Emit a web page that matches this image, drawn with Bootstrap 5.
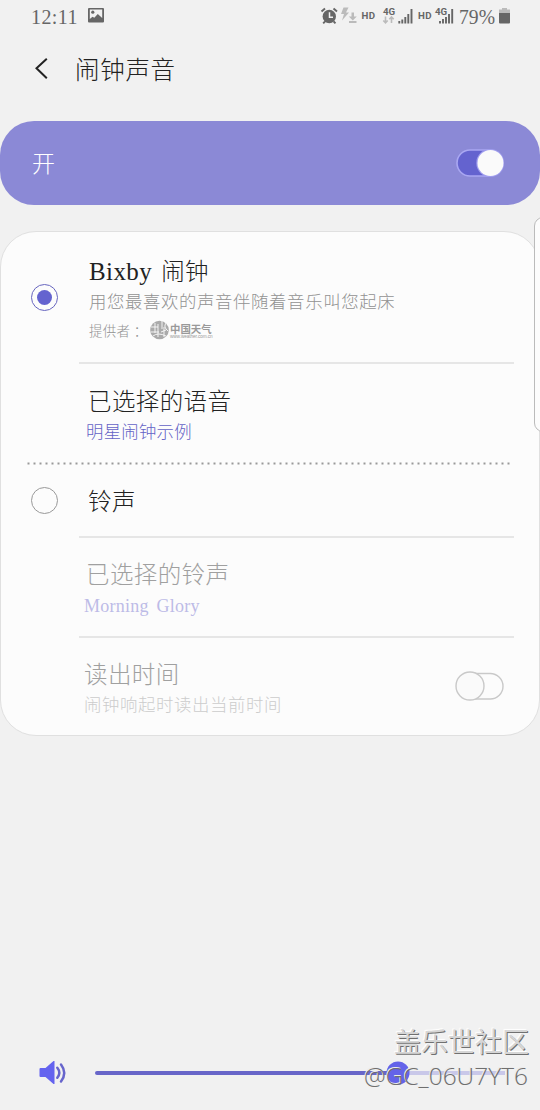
<!DOCTYPE html>
<html lang="zh-CN">
<head>
<meta charset="utf-8">
<meta name="viewport" content="width=device-width, initial-scale=1">
<title>闹钟声音</title>
<link href="https://cdn.jsdelivr.net/npm/bootstrap@5.3.0/dist/css/bootstrap.min.css" rel="stylesheet">
<style>
body{background:#f1f1f1;color:#222;font-family:"Liberation Serif","Noto Sans CJK SC",serif;font-weight:300;line-height:1}
.screen{width:540px;height:1110px}
.screen svg{display:block;flex:none}
.statusbar{height:34px;padding:0 28px 0 31px;color:#666}
.clock{font-size:20px;letter-spacing:.4px}
.photo-icon{margin:-4px 0 0 8px}
.titlebar{height:87px;padding:0 0 17px 34px}
.titlebar h1{font-size:24.5px;font-weight:300;letter-spacing:.7px;line-height:36px;padding-top:3px}
.master{height:84px;border-radius:34px;background:#8b89d6;color:#fff;padding:0 36px 0 32px;margin-bottom:26px}
.master span{font-size:23px;line-height:36px;padding-top:4px}
.panel{height:505px;border:1px solid #e0e0e0;border-radius:36px;background:#fcfcfc;padding:0 25px 0 26px}
.pick{width:52px;flex:none}
.radio-dot{width:27px;height:27px;border-radius:50%;border:1.4px solid #999;margin-left:4px}
.radio-dot.on{border-color:#6765bf}
.radio-dot.on i{width:15px;height:15px;border-radius:50%;background:#6463cf}
.cell{border-bottom:2px solid #e6e6e6}
.ttl{font-size:23.5px;line-height:30px;letter-spacing:.4px;white-space:nowrap}
.latin{font-size:25px;margin-right:9px}
.sub{font-size:17.4px;line-height:24px;letter-spacing:.62px;white-space:nowrap;color:#929292}
.provider{font-size:13.5px;width:60px;letter-spacing:.2px}
.violet{color:#6463c6}
.faded{color:#a0a0a0}
.dots{height:3px;margin:-1px 0 0 -1px}
.logo-name{font:700 10.4px/12px "Noto Sans CJK SC",sans-serif;color:#999}
.logo-url{font:4.7px/4px "Liberation Sans",sans-serif;color:#999;white-space:nowrap;letter-spacing:-.08px}
.volume{position:absolute;left:39px;right:0;top:1056px}
.edge{position:absolute;right:-12px;top:217px;width:18px;height:215px;border:1px solid #bbb;border-radius:9px;background:#fcfcfc}
.stamp{position:absolute;right:11px;top:1023px;font-family:"Noto Sans CJK SC",sans-serif;white-space:nowrap}
.stamp-a{font-size:27px;line-height:36px;font-weight:400;color:#d6d6d6;text-shadow:1px 1px 0 #707070,-1px -1px 1px #fff}
.stamp-b{font:24.5px/34px "Open Sans","Noto Sans CJK SC",sans-serif;font-weight:300;color:#6f6f6f;text-shadow:-1px -1px 0 #ececec;margin-right:1px}
</style>
</head>
<body>
<main class="screen position-relative overflow-hidden d-flex flex-column">
  <div class="statusbar d-flex align-items-center justify-content-between">
    <div class="d-flex align-items-center">
      <span class="clock">12:11</span>
      <svg class="photo-icon" width="20" height="16" viewBox="0 0 20 16"><path fill="#666" fill-rule="evenodd" d="M3 1h14q1 0 1 1v12.500q0 1-1 1H3q-1 0-1-1V2q0-1 1-1m.8 1.500V12l2.700-2.200 1.800 1 3.500-3.800 4.400 4V2.500z"/><circle cx="6.800" cy="5.200" r="1.600" fill="#666"/></svg>
    </div>
    <svg width="192" height="26" viewBox="320 3.500 192 26">
      <g fill="none" stroke="#666">
        <circle cx="329.300" cy="16" r="6.700" fill="#666" stroke="none"/>
        <path stroke-width="1.900" d="M321.500 11l3.500-3M337 11l-3.500-3M325 21l-1.800 1.800M333.700 21l1.800 1.800"/>
        <path stroke="#f1f1f1" stroke-width="1.500" d="M329.500 11.800v5h3.500"/>
      </g>
      <g fill="#bbb"><path d="M343.500 7h5l-2.500 5h3l-7 8 2-6.500h-3z"/><path d="M351.500 12h2.500v4h2.800l-4 4-4-4h2.700zM349 20.500h7.500v2H349z"/></g>
      <g fill="#666" font-family="Roboto,sans-serif" font-weight="700" font-size="9.700"><text x="361.500" y="18" textLength="13.500">HD</text><text x="383" y="14">4G</text><text x="418" y="18" textLength="13.500">HD</text><text x="435" y="14">4G</text></g>
      <path fill="none" stroke="#bbb" stroke-width="1.600" d="M385.500 16v6M383.300 20l2.200 2.300 2.200-2.300M391.500 22.500v-6M389.300 18.700l2.200-2.300 2.200 2.300"/>
      <path stroke="#666" stroke-width="1.900" d="M399.300 23v-2.500M402.300 23v-4M405.300 23v-6.500M408.300 23v-9.500M411.500 23V8.500M440 23v-2.500M443 23v-4.500M446 23v-6.500M449 23V13.500M452.200 23V8.500"/>
      <text x="459" y="23" font-family="Liberation Serif,serif" font-size="20.500" fill="#666" textLength="36" lengthAdjust="spacingAndGlyphs">79%</text>
      <path fill="#bbb" d="M502 7.500h5V9h3v4h-11V9h3z"/><path fill="#666" d="M499 12.500h11V22q0 1-1 1h-9q-1 0-1-1z"/>
    </svg>
  </div>
  <header class="titlebar d-flex align-items-center">
    <svg width="41" height="26" viewBox="0 0 41 26"><path d="M12.800 2.800L2.500 12.300l10.300 9.900" fill="none" stroke="#222" stroke-width="2"/></svg>
    <h1 class="m-0">闹钟声音</h1>
  </header>
  <section class="master d-flex align-items-center justify-content-between">
    <span>开</span>
    <svg width="48" height="28" viewBox="0 0 48 28"><rect x="1" y="1" width="45" height="26" rx="13" fill="#6463cf" stroke="#a9a7f2" stroke-width="1.600"/><circle cx="34.300" cy="14" r="14" fill="#a09eee"/><circle cx="34.500" cy="14" r="13" fill="#fafafa"/></svg>
  </section>
  <section class="panel">
    <div class="d-flex">
      <div class="pick" style="padding-top:51.500px"><div class="radio-dot on d-flex align-items-center justify-content-center"><i></i></div></div>
      <div class="cell flex-fill" style="height:132px;padding:25px 0 0 10px">
        <div class="ttl"><span class="latin">Bixby</span>闹钟</div>
        <div class="sub" style="margin-top:3px">用您最喜欢的声音伴随着音乐叫您起床</div>
        <div class="d-flex align-items-center" style="height:28px;margin-top:2px">
          <span class="sub provider pt-1">提供者&nbsp;：</span>
          <svg width="21" height="20" viewBox="0 0 21 20"><circle cx="10.500" cy="10" r="9.300" fill="#aaa"/><path fill="none" stroke="#fcfcfc" stroke-width=".9" d="M2 7h7M2 12h8M6 3v10M13 1v6M9 4v13M15 9v8M4 16q5-4 13 0M12 12l5-2M17 3q-3 4 2 8M12 8h4"/></svg>
          <div class="d-flex flex-column" style="padding-top:1px"><span class="logo-name">中国天气</span><span class="logo-url">www.weather.com.cn</span></div>
        </div>
      </div>
    </div>
    <div style="height:99px;padding:23px 0 0 61px">
      <div class="ttl">已选择的语音</div>
      <div class="sub violet" style="margin:3px 0 0 -2px;letter-spacing:.25px">明星闹钟示例</div>
    </div>
    <svg class="dots" width="488" height="3"><path d="M1.500 1.500H486" stroke="#999" stroke-width="2" stroke-dasharray="2 4"/></svg>
    <div class="d-flex">
      <div class="pick" style="padding-top:22px"><div class="radio-dot"></div></div>
      <div class="cell flex-fill" style="height:73px;padding:22px 0 0 9px"><div class="ttl">铃声</div></div>
    </div>
    <div class="cell faded" style="height:100px;margin-left:52px;padding:22px 0 0 7px">
      <div class="ttl">已选择的铃声</div>
      <div style="font-size:18px;line-height:24px;margin:4px 0 0 -2px;color:#bdbbe7;word-spacing:3px;letter-spacing:.25px">Morning Glory</div>
    </div>
    <div class="faded d-flex justify-content-between" style="height:97px;margin-left:52px;padding:22px 10px 0 5px">
      <div><div class="ttl">读出时间</div><div class="sub" style="margin-top:3px;color:#ccc">闹钟响起时读出当前时间</div></div>
      <svg style="margin-top:11px" width="49" height="30" viewBox="0 0 49 30"><g stroke="#c9c9c9" stroke-width="1.400"><rect x="3" y="2.500" width="45" height="25.500" rx="12.750" fill="#fcfcfc"/><circle cx="15" cy="15" r="14" fill="#fafafa"/></g></svg>
    </div>
  </section>
  <div class="edge"></div>
  <div class="volume">
    <svg width="501" height="34" viewBox="39 1056 501 34">
      <path fill="#6463ef" d="M39.500 1069q0-1 1-1h5l8-7h1v23h-1l-8-7h-5q-1 0-1-1z"/>
      <path fill="none" stroke="#6765cc" stroke-width="2.500" stroke-linecap="round" d="M57.300 1067.800q4 5 0 10M61 1064.500q6.500 8.500 0 17"/>
      <path stroke="#c9c8e9" stroke-width="4" d="M398 1073h107"/>
      <path stroke="#6866c9" stroke-width="4" stroke-linecap="round" d="M97 1073h301"/>
      <circle cx="398" cy="1073" r="11.500" fill="#6463e9"/>
    </svg>
  </div>
  <div class="stamp text-end"><div class="stamp-a">盖乐世社区</div><div class="stamp-b">@GC_06U7YT6</div></div>
</main>
<script src="https://cdn.jsdelivr.net/npm/bootstrap@5.3.0/dist/js/bootstrap.bundle.min.js"></script>
</body>
</html>
